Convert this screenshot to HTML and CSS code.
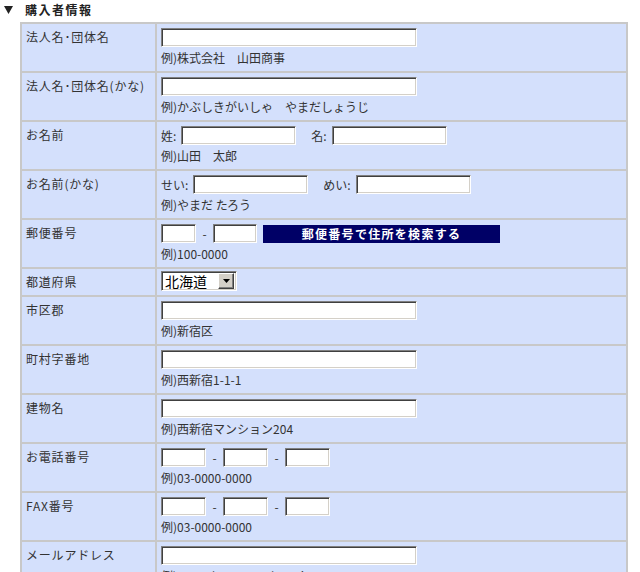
FILE: index.html
```html
<!DOCTYPE html>
<html lang="ja">
<head>
    <meta charset="UTF-8">
    <meta name="viewport" content="width=device-width, initial-scale=1.0">
    <title>購入者情報</title>
    <link rel="stylesheet" href="styles.css">
</head>
<body>
    <div class="heading">
        <svg class="heading-mark" width="9" height="8" viewBox="0 0 9 8"><polygon points="0,0 9,0 4.5,8" fill="#222"/></svg>
        <span class="heading-text">購入者情報</span>
    </div>
    <table class="form-table">
        <colgroup>
            <col class="col-label">
            <col>
        </colgroup>
        <tr>
            <th>法人名･団体名</th>
            <td>
                <div class="field-line"><input type="text" class="txt-long"></div>
                <div class="example">例)株式会社　山田商事</div>
            </td>
        </tr>
        <tr>
            <th>法人名･団体名(かな)</th>
            <td>
                <div class="field-line"><input type="text" class="txt-long"></div>
                <div class="example">例)かぶしきがいしゃ　やまだしょうじ</div>
            </td>
        </tr>
        <tr>
            <th>お名前</th>
            <td>
                <div class="field-line">
                    <span class="sub-label">姓:</span><input type="text" class="txt-name">
                    <span class="sub-label next">名:</span><input type="text" class="txt-name">
                </div>
                <div class="example">例)山田　太郎</div>
            </td>
        </tr>
        <tr>
            <th>お名前(かな)</th>
            <td>
                <div class="field-line">
                    <span class="sub-label">せい:</span><input type="text" class="txt-name">
                    <span class="sub-label next">めい:</span><input type="text" class="txt-name">
                </div>
                <div class="example">例)やまだ たろう</div>
            </td>
        </tr>
        <tr>
            <th>郵便番号</th>
            <td>
                <div class="field-line">
                    <input type="text" class="txt-zip1"><span class="dash">-</span><input type="text" class="txt-zip2">
                    <button type="button" class="zip-btn">郵便番号で住所を検索する</button>
                </div>
                <div class="example">例)100-0000</div>
            </td>
        </tr>
        <tr class="row-select">
            <th>都道府県</th>
            <td>
                <span class="select-box">
                    <select class="pref">
                        <option>北海道</option>
                        <option>青森県</option>
                        <option>岩手県</option>
                    </select>
                    <span class="select-arrow"><svg width="7" height="4" viewBox="0 0 7 4"><polygon points="0,0 7,0 3.5,4" fill="#000"/></svg></span>
                </span>
            </td>
        </tr>
        <tr>
            <th>市区郡</th>
            <td>
                <div class="field-line"><input type="text" class="txt-long"></div>
                <div class="example">例)新宿区</div>
            </td>
        </tr>
        <tr>
            <th>町村字番地</th>
            <td>
                <div class="field-line"><input type="text" class="txt-long"></div>
                <div class="example">例)西新宿1-1-1</div>
            </td>
        </tr>
        <tr>
            <th>建物名</th>
            <td>
                <div class="field-line"><input type="text" class="txt-long"></div>
                <div class="example">例)西新宿マンション204</div>
            </td>
        </tr>
        <tr>
            <th>お電話番号</th>
            <td>
                <div class="field-line">
                    <input type="text" class="txt-tel"><span class="dash">-</span><input type="text" class="txt-tel"><span class="dash">-</span><input type="text" class="txt-tel">
                </div>
                <div class="example">例)03-0000-0000</div>
            </td>
        </tr>
        <tr>
            <th>FAX番号</th>
            <td>
                <div class="field-line">
                    <input type="text" class="txt-tel"><span class="dash">-</span><input type="text" class="txt-tel"><span class="dash">-</span><input type="text" class="txt-tel">
                </div>
                <div class="example">例)03-0000-0000</div>
            </td>
        </tr>
        <tr>
            <th>メールアドレス</th>
            <td>
                <div class="field-line"><input type="text" class="txt-long"></div>
                <div class="example">例)yamada@example.co.jp</div>
            </td>
        </tr>
    </table>
</body>
</html>
```

FILE: styles.css
```css
*{
    margin: 0;
    padding: 0;
    box-sizing: border-box;
}
body{
    background-color: #fff;
    color: #333;
    font-family: "Noto Sans CJK JP", "Liberation Sans", sans-serif;
    font-size: 12px;
    line-height: 16px;
}
.heading{
    height: 22px;
    padding: 2px 4px 0 4px;
    display: flex;
    align-items: flex-start;
}
.heading-mark{
    margin-top: 4px;
    margin-right: 12px;
}
.heading-text{
    font-weight: bold;
    letter-spacing: 1.5px;
    color: #222;
}
.form-table{
    margin-left: 20px;
    width: 608px;
    table-layout: fixed;
    border-collapse: separate;
    border-spacing: 2px;
    background-color: #c8c8c8;
}
.col-label{
    width: 133px;
}
.form-table th,
.form-table td{
    background-color: #d4e0fc;
    vertical-align: top;
    text-align: left;
}
.form-table th{
    font-weight: normal;
    padding: 5px 4px 0 4px;
    letter-spacing: 0.8px;
    white-space: nowrap;
}
.form-table td{
    padding: 4px 4px 5px 4px;
}
.form-table .row-select td{
    padding: 2px 4px 4px 4px;
}
.field-line{
    height: 19px;
    margin-bottom: 3px;
    display: flex;
    align-items: center;
}
.example{
    height: 16px;
    white-space: nowrap;
}
input[type="text"]{
    height: 19px;
    border: 1px solid;
    border-color: #808080 #fff #fff #808080;
    box-shadow: inset 1px 1px 0 #404040, inset -1px -1px 0 #d4d0c8;
    background-color: #fff;
    font-family: inherit;
    font-size: 12px;
    padding: 0 2px;
    outline: none;
}
.txt-long{
    width: 256px;
}
.txt-name{
    width: 115px;
}
.txt-zip1{
    width: 35px;
}
.txt-zip2{
    width: 44px;
}
.txt-tel{
    width: 45px;
}
.sub-label{
    margin-right: 5px;
}
.sub-label.next{
    margin-left: 15px;
}
.dash{
    width: 17px;
    text-align: center;
}
.zip-btn{
    width: 237px;
    height: 18px;
    margin-left: 6px;
    border: none;
    background-color: #000066;
    color: #fff;
    font-family: inherit;
    font-size: 12px;
    font-weight: bold;
    letter-spacing: 1.3px;
    line-height: 18px;
    cursor: pointer;
}
.select-box{
    display: inline-flex;
    align-items: center;
    width: 76px;
    height: 20px;
    border: 1px solid;
    border-color: #808080 #fff #fff #808080;
    box-shadow: inset 1px 1px 0 #404040, inset -1px -1px 0 #d4d0c8;
    background-color: #fff;
    padding: 2px;
}
.pref{
    appearance: none;
    -webkit-appearance: none;
    border: none;
    outline: none;
    background: transparent;
    font-family: inherit;
    font-size: 14px;
    color: #000;
    width: 56px;
    height: 16px;
    line-height: 16px;
    padding-left: 1px;
}
.select-arrow{
    width: 16px;
    height: 16px;
    display: flex;
    align-items: center;
    justify-content: center;
    background-color: #d4d0c8;
    border: 1px solid;
    border-color: #fff #404040 #404040 #fff;
    box-shadow: inset -1px -1px 0 #808080;
}
```
